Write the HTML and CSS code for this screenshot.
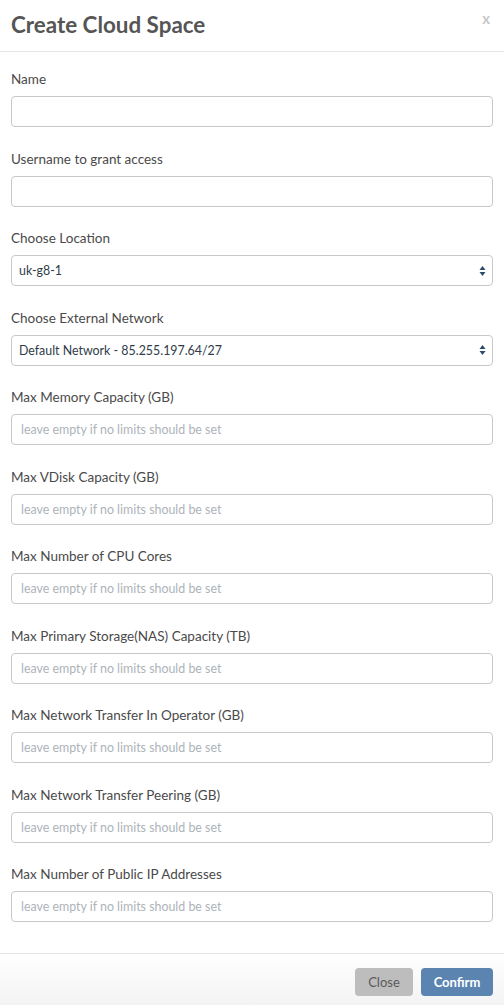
FILE: index.html
```html
<!DOCTYPE html>
<html>
<head>
<meta charset="utf-8">
<link rel="stylesheet" href="styles.css">
</head>
<body>
<div class="modal">
  <div class="modal-header">
    <h2 class="title">Create Cloud Space</h2>
    <span class="close-x">x</span>
  </div>
  <div class="modal-body">
    <div class="group"><label class="lbl">Name</label><input class="ctl" type="text"></div>
    <div class="group"><label class="lbl">Username to grant access</label><input class="ctl" type="text"></div>
    <div class="group"><label class="lbl">Choose Location</label>
      <div class="ctl sel"><span>uk-g8-1</span>
        <svg class="arrows" width="7" height="12" viewBox="0 0 7 12"><path d="M3.5 1 L6.5 5 L0.5 5 Z M3.5 11 L6.5 7 L0.5 7 Z" fill="#2c4a6b"/></svg>
      </div>
    </div>
    <div class="group"><label class="lbl">Choose External Network</label>
      <div class="ctl sel"><span>Default Network - 85.255.197.64/27</span>
        <svg class="arrows" width="7" height="12" viewBox="0 0 7 12"><path d="M3.5 1 L6.5 5 L0.5 5 Z M3.5 11 L6.5 7 L0.5 7 Z" fill="#2c4a6b"/></svg>
      </div>
    </div>
    <div class="group"><label class="lbl">Max Memory Capacity (GB)</label><input class="ctl" type="text" placeholder="leave empty if no limits should be set"></div>
    <div class="group"><label class="lbl">Max VDisk Capacity (GB)</label><input class="ctl" type="text" placeholder="leave empty if no limits should be set"></div>
    <div class="group"><label class="lbl">Max Number of CPU Cores</label><input class="ctl" type="text" placeholder="leave empty if no limits should be set"></div>
    <div class="group"><label class="lbl">Max Primary Storage(NAS) Capacity (TB)</label><input class="ctl" type="text" placeholder="leave empty if no limits should be set"></div>
    <div class="group"><label class="lbl">Max Network Transfer In Operator (GB)</label><input class="ctl" type="text" placeholder="leave empty if no limits should be set"></div>
    <div class="group"><label class="lbl">Max Network Transfer Peering (GB)</label><input class="ctl" type="text" placeholder="leave empty if no limits should be set"></div>
    <div class="group"><label class="lbl">Max Number of Public IP Addresses</label><input class="ctl" type="text" placeholder="leave empty if no limits should be set"></div>
  </div>
  <div class="modal-footer">
    <button class="btn btn-close">Close</button>
    <button class="btn btn-confirm">Confirm</button>
  </div>
</div>
</body>
</html>
```
FILE: styles.css
```css
* { box-sizing: border-box; }
html, body { margin: 0; padding: 0; background: #fff; }
body { font-family: Lato, "Open Sans", sans-serif; color: #4a4a4a; width: 504px; height: 1005px; overflow: hidden; }
.modal { display: flex; flex-direction: column; height: 1005px; }
.modal-header {
  height: 52px; border-bottom: 1px solid #e5e5e5;
  display: flex; align-items: center; justify-content: space-between;
  padding: 0 14px 3px 11px;
}
.title { margin: 0; font-size: 22.4px; font-weight: 700; color: #555; }
.close-x { font-size: 15px; font-weight: 700; color: #c8c8c8; margin-top: -13px; }
.modal-body { padding: 18px 11px 0 11px; flex: 1; }
.group { display: flex; flex-direction: column; margin-bottom: 22.5px; }
.lbl { font-size: 13.5px; line-height: 18px; height: 18px; margin-bottom: 8px; color: #4a4a4a; }
.ctl {
  width: 482px; height: 31px; border: 1px solid #c8c8c8; border-radius: 4px;
  font-family: Lato, "Open Sans", sans-serif; font-size: 12.4px; padding: 0 9px; color: #333;
  background: #fff; outline: none; margin: 0;
}
.ctl::placeholder { color: #adb3ba; }
.sel { display: flex; align-items: center; justify-content: space-between; padding: 0 6px 0 7px; color: #2f3b48; font-size: 12.4px; }
.arrows { display: block; }
.modal-footer {
  height: 52px; border-top: 1px solid #e5e5e5;
  background: linear-gradient(#ffffff, #f3f3f3);
  display: flex; justify-content: flex-end; align-items: center; gap: 8px;
  padding: 5px 11px 0 0;
}
.btn { height: 28px; border: none; border-radius: 4px; font-family: Lato, "Open Sans", sans-serif; font-size: 13px; padding: 0; }
.btn-close { width: 58px; background: #bdbdbd; color: #5a5a5a; }
.btn-confirm { width: 72px; background: #5b84b1; color: #fff; font-weight: 700; }
```
